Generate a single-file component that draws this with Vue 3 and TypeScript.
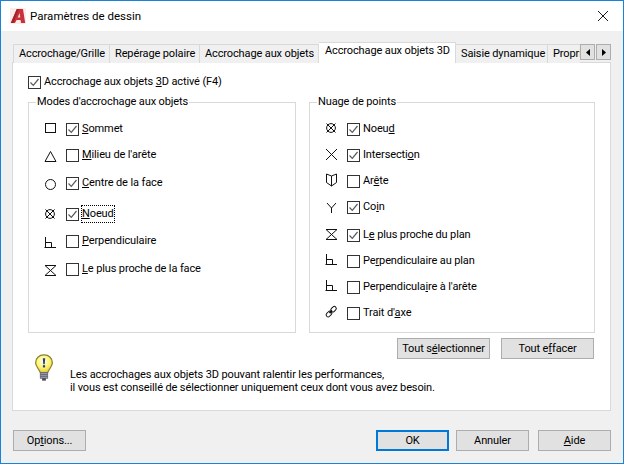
<script setup lang="ts">
type Row = { icon: string; label: string; key: number; on: boolean; h: number; dy: number; focus?: boolean };
const leftRows: Row[] = [
  { icon: 'square', label: 'Sommet', key: 0, on: true, h: 26, dy: 1 },
  { icon: 'triangle', label: "Milieu de l'arête", key: 0, on: false, h: 26, dy: 3 },
  { icon: 'circle', label: 'Centre de la face', key: 0, on: true, h: 30, dy: 3 },
  { icon: 'node', label: 'Noeud', key: 0, on: true, h: 32, dy: 2, focus: true },
  { icon: 'perp', label: 'Perpendiculaire', key: 0, on: false, h: 22, dy: 4 },
  { icon: 'hour', label: 'Le plus proche de la face', key: 0, on: false, h: 34, dy: 3 },
];
const rightRows: Row[] = [
  { icon: 'node', label: 'Noeud', key: 4, on: true, h: 26, dy: 1 },
  { icon: 'x', label: 'Intersection', key: 10, on: true, h: 26, dy: 0 },
  { icon: 'edge', label: 'Arête', key: 2, on: false, h: 26, dy: -1 },
  { icon: 'y', label: 'Coin', key: 2, on: true, h: 26, dy: 3 },
  { icon: 'hour', label: 'Le plus proche du plan', key: 1, on: true, h: 30, dy: 1 },
  { icon: 'perp', label: 'Perpendiculaire au plan', key: 2, on: false, h: 22, dy: 1 },
  { icon: 'perp', label: "Perpendiculaire à l'arête", key: 12, on: false, h: 30, dy: 1 },
  { icon: 'link', label: "Trait d'axe", key: 8, on: false, h: 22, dy: 1 },
];
const tabs = [
  { label: 'Accrochage/Grille', w: 97 },
  { label: 'Repérage polaire', w: 90 },
  { label: 'Accrochage aux objets', w: 119 },
  { label: 'Accrochage aux objets 3D', w: 137, active: true },
  { label: 'Saisie dynamique', w: 92 },
  { label: 'Propriétés rapides', w: 120 },
];
const parts = (r: Row) => [r.label.slice(0, r.key), r.label.slice(r.key, r.key + 1), r.label.slice(r.key + 1)];
const cols = [
  { cls: 'group-left', title: "Modes d'accrochage aux objets", rows: leftRows },
  { cls: 'group-right', title: 'Nuage de points', rows: rightRows },
];
</script>

<template>
  <div class="win">
    <header class="title">
      <svg class="logo" width="16" height="16" viewBox="0 0 16 16">
        <rect width="16" height="16" fill="#fbeeea" />
        <path d="M0.8 15 L6.8 1 H13 L15.2 15 H11 L10.6 12 H6.6 L5 15 Z" fill="#c8303a" />
        <path d="M9.6 5 L7.8 9.5 H10.3 Z" fill="#f7dcd8" />
        <path d="M0.8 15 L6.8 1 H9 L3.5 15 Z" fill="#a8222c" />
      </svg>
      <span class="title-text">Paramètres de dessin</span>
      <svg class="close" width="10" height="10" viewBox="0 0 10 10">
        <path d="M0 0 L10 10 M10 0 L0 10" stroke="#1a1a1a" stroke-width="1" fill="none" />
      </svg>
    </header>

    <main class="body">
      <nav class="strip">
        <div class="tabs">
          <div
            v-for="t in tabs"
            :key="t.label"
            class="tab"
            :class="{ active: t.active }"
            :style="{ width: t.w + 'px' }"
          >{{ t.label }}</div>
        </div>
        <div class="scroller">
          <button class="arrow">
            <svg width="4" height="7" viewBox="0 0 4 7"><path d="M4 0 V7 L0 3.5 Z" fill="#000" /></svg>
          </button>
          <button class="arrow">
            <svg width="4" height="7" viewBox="0 0 4 7"><path d="M0 0 V7 L4 3.5 Z" fill="#000" /></svg>
          </button>
        </div>
      </nav>

      <section class="panel">
        <label class="master">
          <span class="box on">
            <svg width="11" height="11" viewBox="0 0 11 11"><path d="M1.5 5.5 L4.3 8.3 L9.5 2" stroke="#5a5a5a" stroke-width="1.2" fill="none" /></svg>
          </span>
          <span>Accrochage aux objets <u>3</u>D activé (F4)</span>
        </label>

        <div class="groups">
          <fieldset v-for="c in cols" :key="c.cls" class="group" :class="c.cls">
            <legend>{{ c.title }}</legend>
            <div
              v-for="r in c.rows"
              :key="r.label"
              class="row"
              :style="{ height: r.h + 'px' }"
            >
              <svg class="icon" width="14" height="14" viewBox="0 0 14 14" fill="none" stroke="#111" stroke-width="1">
                <g :transform="`translate(0 ${r.dy})`">
                  <rect v-if="r.icon === 'square'" x="1.5" y="0.5" width="10" height="9" />
                  <path v-else-if="r.icon === 'triangle'" d="M1 10.5 H12 L6.5 0.5 Z" />
                  <circle v-else-if="r.icon === 'circle'" cx="6.5" cy="5.5" r="5" />
                  <g v-else-if="r.icon === 'node'">
                    <circle cx="6" cy="5" r="4.4" />
                    <path d="M1.5 0.5 L10.5 9.5 M10.5 0.5 L1.5 9.5" />
                  </g>
                  <path v-else-if="r.icon === 'perp'" d="M1.5 -1 V9.5 M0.5 9.5 H12 M1.5 4.5 H7.5 V9.5" />
                  <path v-else-if="r.icon === 'hour'" d="M1 0.5 H12 L1 10.5 H12 Z" />
                  <path v-else-if="r.icon === 'x'" d="M1 1 L12 12 M12 1 L1 12" />
                  <path v-else-if="r.icon === 'y'" d="M2 0 L6.5 5 L11 0 M6.5 5 V10" />
                  <path v-else-if="r.icon === 'edge'" d="M1.5 1 L6.5 3 L11.5 1 V9.5 L6.5 13 L1.5 9.5 Z M6.5 3 V13" />
                  <g v-else-if="r.icon === 'link'">
                    <rect x="6" y="0.8" width="6" height="4" rx="2" transform="rotate(-45 8 3)" fill="#fff" />
                    <rect x="0.8" y="5" width="6.4" height="4" rx="2" transform="rotate(-45 4 7)" fill="#fff" />
                    <path d="M4.5 6 L7 3.5" stroke-width="1.8" />
                  </g>
                </g>
              </svg>
              <span class="box" :class="{ on: r.on }">
                <svg v-if="r.on" width="11" height="11" viewBox="0 0 11 11"><path d="M1.5 5.5 L4.3 8.3 L9.5 2" stroke="#5a5a5a" stroke-width="1.2" fill="none" /></svg>
              </span>
              <span class="lbl" :class="{ focus: r.focus }">{{ parts(r)[0] }}<u>{{ parts(r)[1] }}</u>{{ parts(r)[2] }}</span>
            </div>
          </fieldset>
        </div>

        <div class="actions">
          <button class="btn wide">Tout s<u>é</u>lectionner</button>
          <button class="btn wide">Tout e<u>f</u>facer</button>
        </div>

        <div class="note">
          <svg class="bulb" width="20" height="28" viewBox="0 0 20 30">
            <defs>
              <radialGradient id="bg" cx="0.45" cy="0.35" r="0.7">
                <stop offset="0" stop-color="#ffffe8" />
                <stop offset="0.55" stop-color="#fff570" />
                <stop offset="1" stop-color="#d8c030" />
              </radialGradient>
            </defs>
            <path d="M10 1 C4.5 1 1 4.8 1 9.3 C1 13.5 4.5 15.5 6 20 H14 C15.5 15.5 19 13.5 19 9.3 C19 4.8 15.5 1 10 1 Z" fill="url(#bg)" stroke="#8a8030" stroke-width="1.3" />
            <rect x="6" y="20" width="8" height="6" fill="#9a9aa8" stroke="#5f5f70" stroke-width="0.8" />
            <path d="M6 22 H14 M6 24 H14" stroke="#55556a" stroke-width="0.8" />
            <rect x="8" y="26" width="4" height="2.5" fill="#44444f" />
            <path d="M8.7 4.5 H11.3 L10.8 11 H9.2 Z" fill="#27408b" />
            <rect x="8.8" y="12" width="2.4" height="2.4" fill="#27408b" />
          </svg>
          <p class="note-text">Les accrochages aux objets 3D pouvant ralentir les performances,<br />il vous est conseillé de sélectionner uniquement ceux dont vous avez besoin.</p>
        </div>
      </section>

      <footer class="foot">
        <button class="btn">Op<u>t</u>ions...</button>
        <div class="foot-right">
          <button class="btn primary">OK</button>
          <button class="btn">Annuler</button>
          <button class="btn"><u>A</u>ide</button>
        </div>
      </footer>
    </main>
  </div>
</template>

<style>
html, body { margin: 0; padding: 0; }
</style>

<style scoped>
* { box-sizing: border-box; }
.win {
  width: 624px;
  height: 464px;
  border: 1px solid #1883d7;
  display: flex;
  flex-direction: column;
  font: 11px/16px Roboto, "Liberation Sans", sans-serif;
  letter-spacing: -0.12px;
  color: #000;
  background: #f0f0f0;
  overflow: hidden;
}
.title {
  height: 30px;
  background: #fff;
  display: flex;
  align-items: center;
  padding: 0 15px 0 9px;
  flex: none;
}
.title-text { margin-left: 4px; flex: 1; color: #000; font-size: 11.5px; letter-spacing: 0; }
.logo { flex: none; }
.close { flex: none; }
.body { flex: 1; padding: 11px 12px 0 11px; display: flex; flex-direction: column; }
.strip { height: 20px; display: flex; position: relative; z-index: 1; }
.tabs { display: flex; width: 568px; overflow: hidden; align-items: flex-end; padding: 0 0 0 1px; height: 21px; }
.tab {
  flex: none;
  height: 19px;
  background: #f0f0f0;
  border: 1px solid #d9d9d9;
  border-bottom: none;
  border-left-width: 0;
  white-space: nowrap;
  padding: 1px 0 0 5px;
  overflow: hidden;
}
.tab:first-child { border-left-width: 1px; }
.tab.active {
  height: 21px;
  background: #fff;
  padding: 0 0 0 6px;
}
.scroller { display: flex; gap: 1px; height: 16px; margin-top: 2px; }
.arrow {
  width: 15px;
  height: 16px;
  padding: 0;
  margin: 0;
  background: #e1e1e1;
  border: 1px solid #adadad;
  display: flex;
  align-items: center;
  justify-content: center;
}
.panel {
  height: 349px;
  background: #fff;
  border: 1px solid #d9d9d9;
  display: flex;
  flex-direction: column;
  padding: 12px 15px 0;
}
.master { display: flex; align-items: center; height: 14px; gap: 3px; }
.box {
  width: 13px;
  height: 13px;
  border: 1px solid #333;
  background: #fff;
  display: inline-flex;
  flex: none;
  align-items: center;
  justify-content: center;
}
.groups { display: flex; gap: 13px; margin-top: 6px; }
.group {
  margin: 0;
  border: 1px solid #d9d9d9;
  padding: 7px 0 0 15px;
  height: 238px;
  min-width: 0;
}
.group legend {
  padding: 0 1px;
  margin-left: -8px;
  line-height: 14px;
}
.group-left { width: 268px; }
.group-right { width: 286px; }
.row { display: flex; align-items: center; }
.icon { flex: none; margin-right: 8px; overflow: visible; }
.lbl { margin-left: 3px; white-space: nowrap; }
.lbl.focus { outline: 1px dotted #000; outline-offset: 0; }
.actions {
  display: flex;
  justify-content: flex-end;
  gap: 11px;
  margin: 5px 1px 0 0;
}
.btn {
  width: 73px;
  height: 21px;
  padding: 0;
  background: #e1e1e1;
  border: 1px solid #adadad;
  font: inherit;
  letter-spacing: inherit;
  color: #000;
  text-align: center;
  white-space: nowrap;
}
.btn.wide { width: 93px; }
.btn.primary { border: 2px solid #0078d7; }
.note { display: flex; margin: -5px 0 0 6px; }
.bulb { flex: none; }
.note-text { margin: 14px 0 0 16px; line-height: 13px; }
.foot { display: flex; justify-content: space-between; margin-top: 19px; padding-left: 1px; }
.foot-right { display: flex; gap: 7px; }
.foot-right .btn:nth-child(3) { margin-left: 2px; }
</style>
